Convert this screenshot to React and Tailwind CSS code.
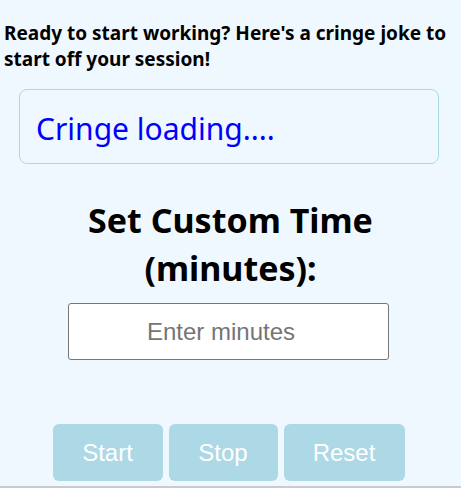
export default function App() {
  return (
    <div className="min-h-[488px] bg-[#f0f8ff] text-black font-['Noto_Sans',sans-serif] overflow-hidden">
      <div className="pt-[20px] pl-[4px] pr-[8px]">
        <h3 className="text-[19px] font-bold leading-[26px]">
          Ready to start working? Here's a cringe joke to start off your session!
        </h3>
      </div>

      <div className="mt-[17px] ml-[19px] mr-[22px] h-[75px] border border-[#add8e6] rounded-[8px] flex items-center px-[16px] pt-[5px]">
        <span className="text-[30px] text-[#0000ff] leading-none">Cringe loading....</span>
      </div>

      <h2 className="mt-[32px] text-center text-[34px] font-bold leading-[48px] px-[60px]">
        Set Custom Time (minutes):
      </h2>

      <div className="mt-[11px] flex justify-center pr-[4px]">
        <input
          type="number"
          placeholder="Enter minutes"
          className="w-[321px] h-[57px] bg-white border border-[#767676] rounded-[3px] text-center text-[24px] font-['Liberation_Sans',sans-serif] placeholder:text-[#757575] outline-none"
        />
      </div>

      <div className="mt-[64px] flex justify-center gap-[6px] pr-[4px] font-['Liberation_Sans',sans-serif]">
        <button className="w-[110px] h-[57px] bg-[#add8e6] text-white text-[24px] rounded-[6px]">Start</button>
        <button className="w-[109px] h-[57px] bg-[#add8e6] text-white text-[24px] rounded-[6px]">Stop</button>
        <button className="w-[121px] h-[57px] bg-[#add8e6] text-white text-[24px] rounded-[6px]">Reset</button>
      </div>

      <div className="mt-[5px] h-[2px] bg-[#c8ccd0]" />
    </div>
  );
}
